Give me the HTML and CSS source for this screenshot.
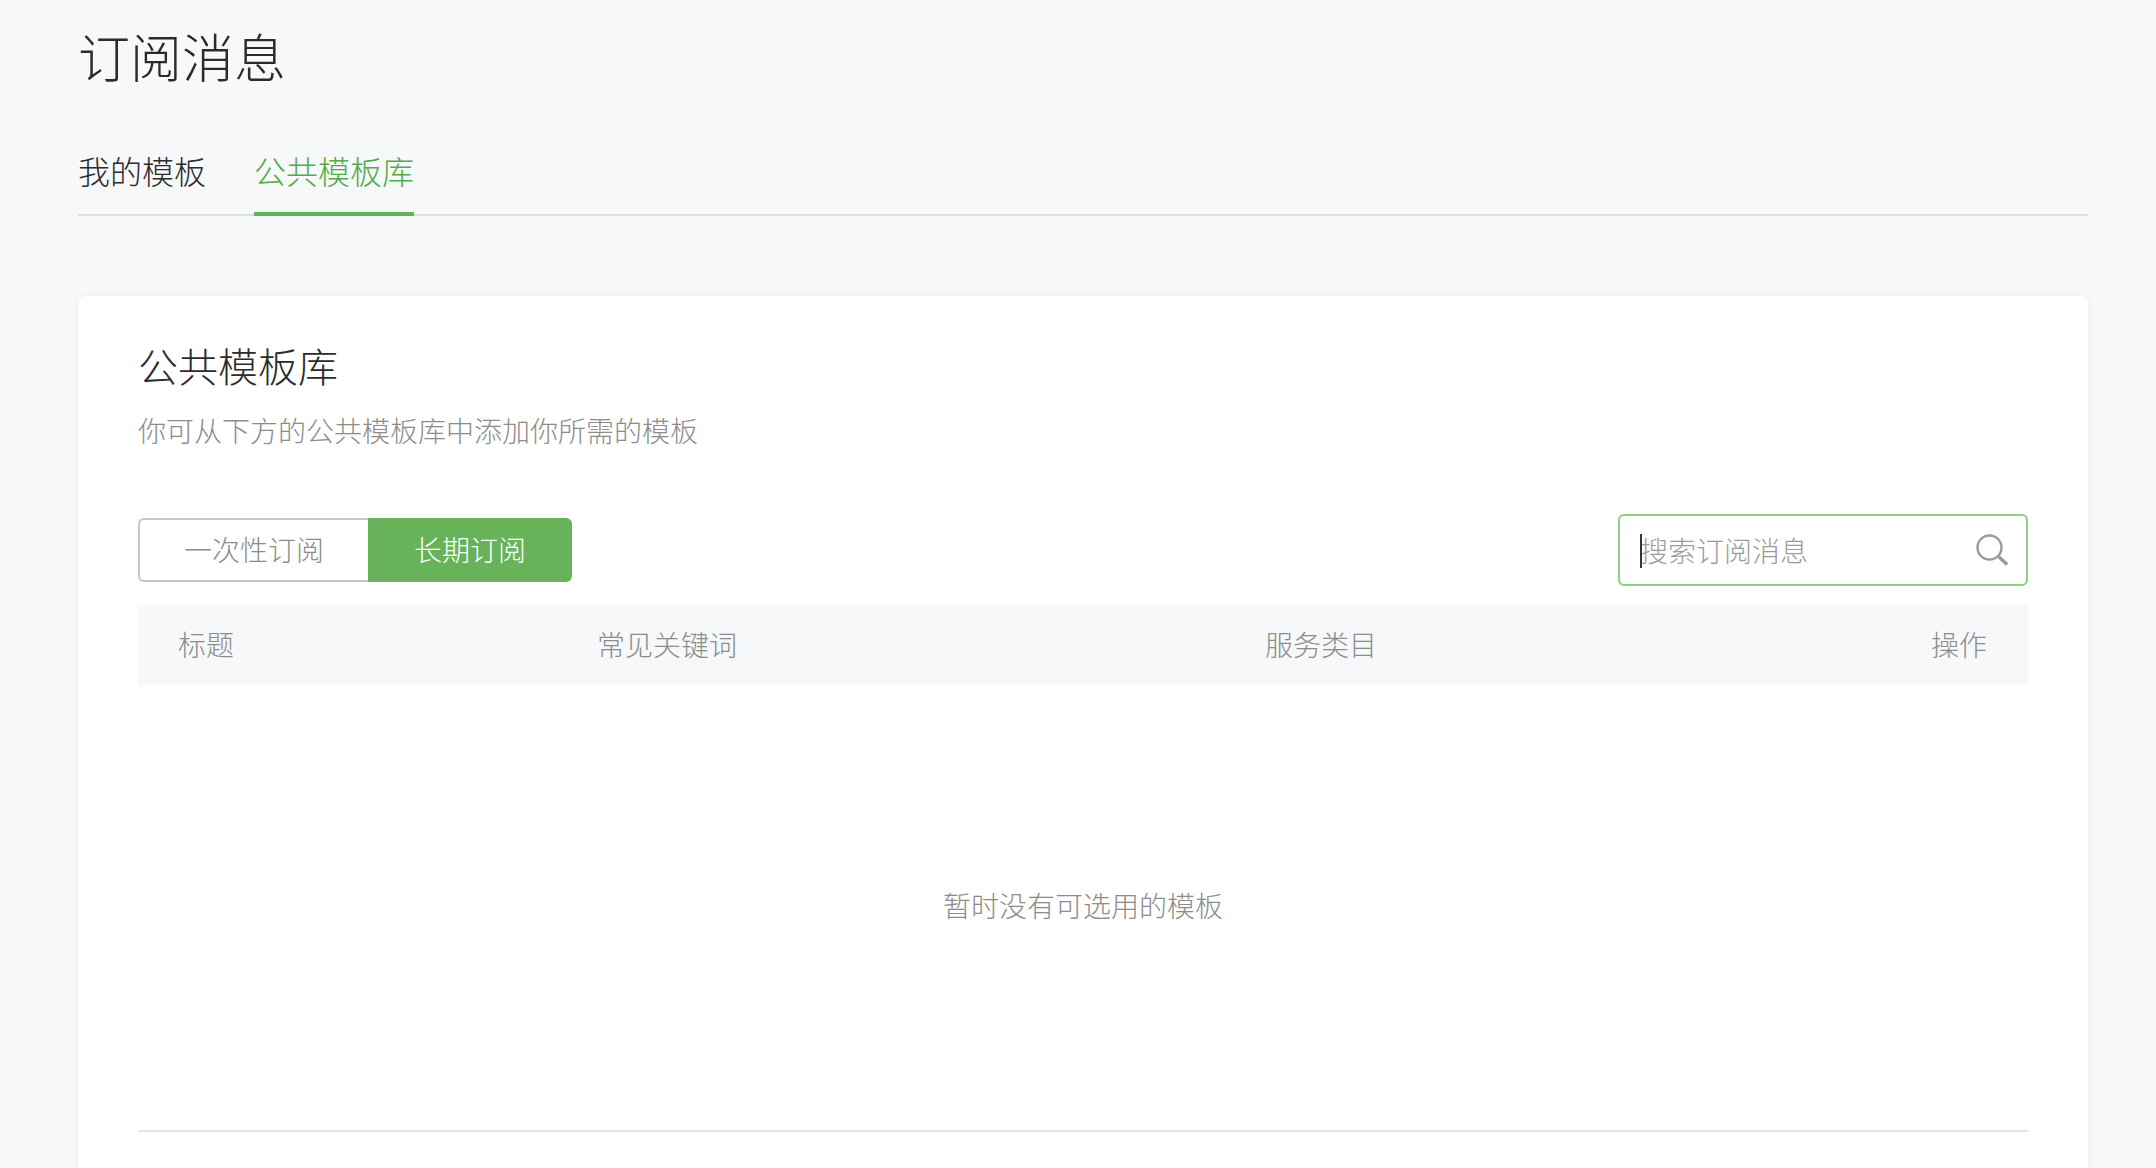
FILE: index.html
```html
<!DOCTYPE html>
<html lang="zh-CN">
<head>
  <meta charset="UTF-8" />
  <meta name="viewport" content="width=device-width, initial-scale=1.0"/>
  <title>订阅消息</title>
  <link rel="stylesheet" href="styles.css">
</head>
<body>
  <div class="page">
    <h1 class="page-title">订阅消息</h1>
    <div class="tabs">
      <a class="tab">我的模板</a>
      <a class="tab active">公共模板库</a>
    </div>

    <div class="card">
      <h2 class="card-title">公共模板库</h2>
      <p class="card-desc">你可从下方的公共模板库中添加你所需的模板</p>

      <div class="toolbar">
        <div class="switch">
          <a class="switch-item">一次性订阅</a>
          <a class="switch-item selected">长期订阅</a>
        </div>
        <div class="search">
          <span class="caret"></span>
          <input class="search-input" type="text" placeholder="搜索订阅消息" />
          <svg class="search-icon" viewBox="0 0 32 32" fill="none" stroke="#9a9a9a">
            <circle cx="13.5" cy="13.5" r="12" stroke-width="2.4"/>
            <path d="M22.5 22.5L31 30.5" stroke-width="3.4"/>
          </svg>
        </div>
      </div>

      <div class="table-head">
        <div class="col">标题</div>
        <div class="col">常见关键词</div>
        <div class="col">服务类目</div>
        <div class="col col-right">操作</div>
      </div>
      <div class="table-empty">暂时没有可选用的模板</div>
    </div>
  </div>
</body>
</html>
```

FILE: styles.css
```css
* {
  box-sizing: border-box;
}

html, body {
  height: 100%;
  overflow: hidden;
}

body {
  margin: 0;
  background-color: #f7f8fa;
  color: #2b2b2b;
  font-family: "Noto Sans CJK SC", "Noto Sans", sans-serif;
  font-weight: 300;
}

.page {
  padding: 20px 68px 0 78px;
}

.page-title {
  margin: 0;
  font-size: 52px;
  font-weight: 300;
  line-height: 72px;
}

.tabs {
  display: flex;
  gap: 48px;
  margin-top: 54px;
  border-bottom: 2px solid #dedfe1;
}

.tab {
  margin-bottom: -2px;
  padding-bottom: 18px;
  border-bottom: 4px solid transparent;
  font-size: 32px;
  line-height: 48px;
}

.tab.active {
  color: #52ab47;
  border-bottom-color: #5fb556;
}

.card {
  margin-top: 80px;
  padding: 41px 60px 60px;
  background-color: white;
  border-radius: 8px;
  box-shadow: 0 0 6px rgba(0,0,0,0.05);
}

.card-title {
  margin: 0;
  font-size: 40px;
  font-weight: 300;
  line-height: 56px;
}

.card-desc {
  margin: 17px 0 0;
  color: #8c8c8c;
  font-size: 28px;
  line-height: 40px;
}

.toolbar {
  display: flex;
  justify-content: space-between;
  align-items: center;
  margin-top: 64px;
}

.switch {
  display: flex;
  height: 64px;
}

.switch-item {
  padding: 0 44px;
  border: 2px solid #c8c8c8;
  border-right: 0;
  border-radius: 6px 0 0 6px;
  color: #8c8c8c;
  font-size: 28px;
  line-height: 59px;
}

.switch-item.selected {
  padding: 0 46px;
  border: 0;
  border-radius: 0 6px 6px 0;
  background-color: #66b35a;
  color: white;
  line-height: 63px;
}

.search {
  position: relative;
  display: flex;
  align-items: center;
  width: 410px;
  height: 72px;
  padding: 0 18px 0 20px;
  border: 2px solid #8fcf82;
  border-radius: 6px;
}

.caret {
  position: absolute;
  left: 20px;
  top: 18px;
  width: 2px;
  height: 34px;
  background-color: #353535;
}

.search-input {
  flex: 1;
  min-width: 0;
  padding: 0;
  border: 0;
  outline: 0;
  background: none;
  font-family: inherit;
  font-weight: 300;
  font-size: 28px;
  line-height: 40px;
}

.search-input::placeholder {
  color: #9c9c9c;
  opacity: 1;
}

.search-icon {
  width: 32px;
  height: 32px;
}

.table-head {
  display: grid;
  grid-template-columns: 419px 668px 1fr auto;
  height: 80px;
  margin-top: 19px;
  background-color: #f7f8fa;
  color: #8c8c8c;
  font-size: 28px;
  line-height: 78px;
}

.col {
  padding-left: 40px;
}

.col-right {
  padding: 0 41px 0 0;
}

.table-empty {
  display: flex;
  justify-content: center;
  align-items: center;
  height: 447px;
  padding-bottom: 6px;
  border-bottom: 2px solid #e5e5e5;
  color: #8c8c8c;
  font-size: 28px;
}
```
